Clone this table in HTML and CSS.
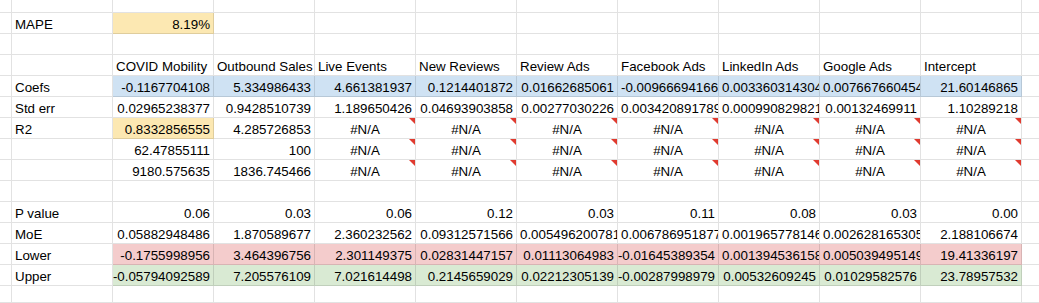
FILE: index.html
```html
<!DOCTYPE html>
<html>
<head>
<meta charset="utf-8">
<link rel="stylesheet" href="styles.css">
</head>
<body>
<div class="sheet">
  <div class="row first">
    <div class="c e"></div><div class="c"></div><div class="c"></div><div class="c"></div><div class="c"></div><div class="c"></div><div class="c"></div><div class="c"></div><div class="c"></div><div class="c"></div><div class="c"></div><div class="c z"></div>
  </div>
  <div class="row">
    <div class="c e"></div><div class="c">MAPE</div><div class="c n y">8.19%</div><div class="c"></div><div class="c"></div><div class="c"></div><div class="c"></div><div class="c"></div><div class="c"></div><div class="c"></div><div class="c"></div><div class="c z"></div>
  </div>
  <div class="row">
    <div class="c e"></div><div class="c"></div><div class="c"></div><div class="c"></div><div class="c"></div><div class="c"></div><div class="c"></div><div class="c"></div><div class="c"></div><div class="c"></div><div class="c"></div><div class="c z"></div>
  </div>
  <div class="row">
    <div class="c e"></div><div class="c"></div><div class="c">COVID Mobility</div><div class="c">Outbound Sales</div><div class="c">Live Events</div><div class="c">New Reviews</div><div class="c">Review Ads</div><div class="c">Facebook Ads</div><div class="c">LinkedIn Ads</div><div class="c">Google Ads</div><div class="c">Intercept</div><div class="c z"></div>
  </div>
  <div class="row">
    <div class="c e"></div><div class="c">Coefs</div><div class="c n b">-0.1167704108</div><div class="c n b">5.334986433</div><div class="c n b">4.661381937</div><div class="c n b">0.1214401872</div><div class="c n b">0.01662685061</div><div class="c cl b">-0.009666941662</div><div class="c cl b">0.003360314304</div><div class="c cl b">0.007667660454</div><div class="c n b">21.60146865</div><div class="c z"></div>
  </div>
  <div class="row">
    <div class="c e"></div><div class="c">Std err</div><div class="c n">0.02965238377</div><div class="c n">0.9428510739</div><div class="c n">1.189650426</div><div class="c n">0.04693903858</div><div class="c n">0.00277030226</div><div class="c cl">0.003420891789</div><div class="c cl">0.000990829821</div><div class="c n">0.00132469911</div><div class="c n">1.10289218</div><div class="c z"></div>
  </div>
  <div class="row">
    <div class="c e"></div><div class="c">R2</div><div class="c n y">0.8332856555</div><div class="c n">4.285726853</div><div class="c na">#N/A</div><div class="c na">#N/A</div><div class="c na">#N/A</div><div class="c na">#N/A</div><div class="c na">#N/A</div><div class="c na">#N/A</div><div class="c na">#N/A</div><div class="c z"></div>
  </div>
  <div class="row">
    <div class="c e"></div><div class="c"></div><div class="c n">62.47855111</div><div class="c n">100</div><div class="c na">#N/A</div><div class="c na">#N/A</div><div class="c na">#N/A</div><div class="c na">#N/A</div><div class="c na">#N/A</div><div class="c na">#N/A</div><div class="c na">#N/A</div><div class="c z"></div>
  </div>
  <div class="row">
    <div class="c e"></div><div class="c"></div><div class="c n">9180.575635</div><div class="c n">1836.745466</div><div class="c na">#N/A</div><div class="c na">#N/A</div><div class="c na">#N/A</div><div class="c na">#N/A</div><div class="c na">#N/A</div><div class="c na">#N/A</div><div class="c na">#N/A</div><div class="c z"></div>
  </div>
  <div class="row">
    <div class="c e"></div><div class="c"></div><div class="c"></div><div class="c"></div><div class="c"></div><div class="c"></div><div class="c"></div><div class="c"></div><div class="c"></div><div class="c"></div><div class="c"></div><div class="c z"></div>
  </div>
  <div class="row">
    <div class="c e"></div><div class="c">P value</div><div class="c n">0.06</div><div class="c n">0.03</div><div class="c n">0.06</div><div class="c n">0.12</div><div class="c n">0.03</div><div class="c n">0.11</div><div class="c n">0.08</div><div class="c n">0.03</div><div class="c n">0.00</div><div class="c z"></div>
  </div>
  <div class="row">
    <div class="c e"></div><div class="c">MoE</div><div class="c n">0.05882948486</div><div class="c n">1.870589677</div><div class="c n">2.360232562</div><div class="c n">0.09312571566</div><div class="c cl">0.005496200781</div><div class="c cl">0.006786951877</div><div class="c cl">0.001965778146</div><div class="c cl">0.002628165305</div><div class="c n">2.188106674</div><div class="c z"></div>
  </div>
  <div class="row">
    <div class="c e"></div><div class="c">Lower</div><div class="c n r">-0.1755998956</div><div class="c n r">3.464396756</div><div class="c n r">2.301149375</div><div class="c n r">0.02831447157</div><div class="c n r">0.01113064983</div><div class="c n r">-0.01645389354</div><div class="c cl r">0.001394536158</div><div class="c cl r">0.005039495149</div><div class="c n r">19.41336197</div><div class="c z"></div>
  </div>
  <div class="row">
    <div class="c e"></div><div class="c">Upper</div><div class="c n g">-0.05794092589</div><div class="c n g">7.205576109</div><div class="c n g">7.021614498</div><div class="c n g">0.2145659029</div><div class="c n g">0.02212305139</div><div class="c n g">-0.00287998979</div><div class="c n g">0.00532609245</div><div class="c n g">0.01029582576</div><div class="c n g">23.78957532</div><div class="c z"></div>
  </div>
  <div class="row last">
    <div class="c e"></div><div class="c"></div><div class="c"></div><div class="c"></div><div class="c"></div><div class="c"></div><div class="c"></div><div class="c"></div><div class="c"></div><div class="c"></div><div class="c"></div><div class="c z"></div>
  </div>
</div>
</body>
</html>
```

FILE: styles.css
```css
html, body {
  margin: 0;
  padding: 0;
  background: #ffffff;
}

.sheet {
  display: flex;
  flex-direction: column;
  width: 1039px;
  height: 303px;
  overflow: hidden;
  font-family: "Liberation Sans", Arial, sans-serif;
  font-size: 13.333px;
  color: #000000;
}

.row {
  display: flex;
  flex: none;
  height: 21px;
}

.row.first {
  height: 13px;
}

.row.last {
  height: 17px;
}

.c {
  position: relative;
  flex: none;
  box-sizing: border-box;
  width: 101px;
  height: 100%;
  padding: 3px 3px 0 3px;
  line-height: 17px;
  white-space: nowrap;
  overflow: hidden;
  border-right: 1px solid rgba(0, 0, 0, 0.115);
  border-bottom: 1px solid rgba(0, 0, 0, 0.115);
  text-align: left;
}

.c.e {
  width: 12px;
  padding: 0;
}

.c.z {
  width: 17px;
  padding: 0;
  border-right: none;
}

/* right-aligned numbers: overflow spills to the left like the sheet does */
.n {
  display: flex;
  justify-content: flex-end;
}

/* long numbers: shown from the left and cut at the cell edge */
.cl {
  text-align: left;
  padding-right: 0;
}

.na {
  text-align: center;
}

.na::after {
  content: "";
  position: absolute;
  top: 0;
  right: 0;
  width: 0;
  height: 0;
  border-style: solid;
  border-width: 0 6px 6px 0;
  border-color: transparent #e03a2f transparent transparent;
}

.y {
  background: #fce8b2;
}

.b {
  background: #cfe2f3;
}

.r {
  background: #f4cccc;
}

.g {
  background: #d9ead3;
}
```
